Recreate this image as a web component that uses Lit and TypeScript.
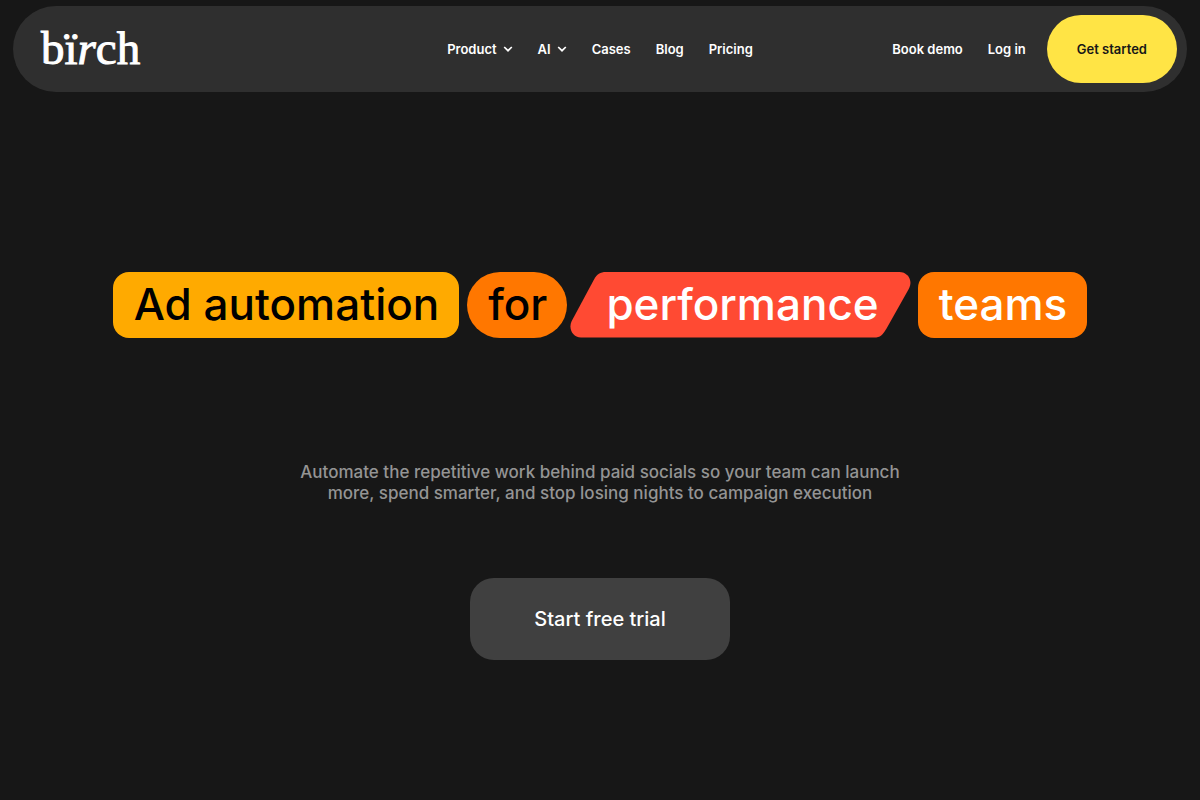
import { LitElement, html, css, svg } from "lit";
import { customElement } from "lit/decorators.js";

const chevron = html`<svg class="chevron" viewBox="0 0 10 6" aria-hidden="true">
  ${svg`<path d="M1.2 1 L5 4.7 L8.8 1" fill="none" stroke="currentColor" stroke-width="1.7" />`}
</svg>`;

@customElement("app-root")
export class AppRoot extends LitElement {
  static styles = css`
    :host {
      display: flex;
      flex-direction: column;
      box-sizing: border-box;
      min-height: 100vh;
      padding: 6px 13px;
      background: #171717;
      color: #fff;
      font-family: Inter, "Open Sans", sans-serif;
    }
    a {
      color: inherit;
      text-decoration: none;
    }
    button {
      border: 0;
      font: inherit;
      cursor: pointer;
    }
    .bar {
      display: grid;
      grid-template-columns: 1fr auto 1fr;
      align-items: center;
      padding: 9px 10px;
      border-radius: 43px;
      background: #2f2f2f;
      font-size: 13px;
      font-weight: 600;
      line-height: 20px;
    }
    .logo {
      justify-self: start;
      padding: 0 0 2px 18px;
      font: 400 47px/56px "Liberation Serif", serif;
      -webkit-text-stroke: 1px currentColor;
    }
    .menu,
    .account {
      display: flex;
      align-items: center;
      gap: 25px;
    }
    .menu-item {
      display: flex;
      align-items: center;
      gap: 6px;
      padding: 0;
      background: none;
      color: inherit;
    }
    .chevron {
      width: 10px;
      height: 6px;
    }
    .account {
      justify-self: end;
    }
    .start {
      margin-left: -4px;
      padding: 24px 30px;
      border-radius: 34px;
      background: #ffe445;
      color: #171717;
    }
    .hero {
      display: flex;
      flex-direction: column;
      align-items: center;
      padding-top: 180px;
      text-align: center;
    }
    .title {
      display: flex;
      flex-wrap: wrap;
      justify-content: center;
      gap: 8px;
      margin: 0;
      font-size: 44px;
      font-weight: 500;
      line-height: 64px;
    }
    .word {
      padding: 0 20px 2px 21px;
      border-radius: 16px;
    }
    .amber {
      background: #ffaa00;
      color: #000;
    }
    .round {
      border-radius: 33px;
      background: #ff7700;
      color: #000;
    }
    .slanted {
      position: relative;
      margin: 0 -1px 0 -5px;
      padding: 0 32px 2px 36px;
    }
    .shape {
      position: absolute;
      inset: 0;
      width: 100%;
      height: 100%;
    }
    .label {
      position: relative;
    }
    .orange {
      background: #ff7700;
    }
    .lead {
      max-width: 640px;
      margin: 124px 0 0;
      color: #949494;
      font-size: 17px;
      font-weight: 500;
      line-height: 21px;
    }
    .trial {
      margin-top: 74px;
      padding: 26px 64px;
      border-radius: 24px;
      background: #404040;
      font-size: 20px;
      font-weight: 500;
      line-height: 30px;
    }
  `;

  render() {
    return html`
      <header class="bar">
        <a class="logo" href="#" aria-label="birch">bï<i>r</i>ch</a>
        <nav class="menu">
          <button class="menu-item">Product ${chevron}</button>
          <button class="menu-item">AI ${chevron}</button>
          <a href="#">Cases</a>
          <a href="#">Blog</a>
          <a href="#">Pricing</a>
        </nav>
        <div class="account">
          <a href="#">Book demo</a>
          <a href="#">Log in</a>
          <a class="start" href="#">Get started</a>
        </div>
      </header>
      <main class="hero">
        <h1 class="title">
          <span class="word amber">Ad automation</span>
          <span class="word round">for</span>
          <span class="slanted">
            <svg class="shape" viewBox="0 0 340 66" preserveAspectRatio="none" aria-hidden="true">
              <path
                fill="#ff4a33"
                d="M36 0H329C338 0 343 9 338.5 17L316 57C312.5 63 310 65.5 304 65.5H11C2 65.5 -2 56 2 48.5L24 7.5C27 2 30 0 36 0Z"
              />
            </svg>
            <span class="label">performance</span>
          </span>
          <span class="word orange">teams</span>
        </h1>
        <p class="lead">
          Automate the repetitive work behind paid socials so your team can launch<br />
          more, spend smarter, and stop losing nights to campaign execution
        </p>
        <a class="trial" href="#">Start free trial</a>
      </main>
    `;
  }
}
